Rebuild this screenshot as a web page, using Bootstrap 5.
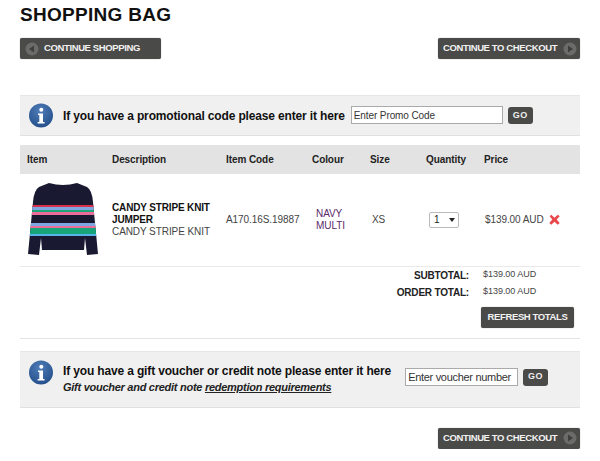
<!DOCTYPE html>
<html lang="en">
<head>
  <meta charset="utf-8">
  <title>Shopping Bag</title>
  <link href="https://cdn.jsdelivr.net/npm/bootstrap@5.3.0/dist/css/bootstrap.min.css" rel="stylesheet" />
  <style>
    body { font-family: "Liberation Sans", Arial, sans-serif; font-size: 10px; color: #333; background: #fff; }
    .bag-page { width: 560px; margin-left: 20px; }
    .bag-title { font-size: 19px; line-height: 22px; font-weight: 700; color: #111; margin: 4px 0 12px; letter-spacing: .3px; }
    .bag-btn { display: inline-flex; align-items: center; height: 21px; background: #4a4a48; color: #f2f2f2; font-size: 9.5px; font-weight: 700; letter-spacing: -.38px; border-radius: 2px; border: 0; padding: 0 5px; text-decoration: none; box-shadow: 0 0 1px #777; }
    .bag-btn svg { flex: none; }
    .btn-back { width: 141px; }
    .btn-back span { margin-left: 5px; }
    .btn-next { width: 142px; justify-content: space-between; padding-right: 3px; }
    .promo-box { background: #f0f0f0; border-top: 1px solid #e6e6e6; border-bottom: 1px solid #e0e0e0; padding-left: 8px; }
    .promo-one { height: 41px; margin-top: 36px; }
    .promo-two { height: 57px; margin-top: 12px; }
    .promo-icon { flex: none; margin-right: 9px; }
    .icon-top { align-self: flex-start; margin-top: 8px; }
    .promo-text { font-size: 12px; font-weight: 700; color: #111; letter-spacing: -.15px; white-space: nowrap; }
    .promo-sub { font-size: 11px; line-height: 13px; font-style: italic; font-weight: 700; color: #222; letter-spacing: -.27px; margin: 1px 0 2px; }
    .promo-sub a { color: #222; }
    .promo-input { height: 18px; border: 1px solid #aaa; background: #fff; font-size: 10px; color: #333; padding: 0 2px; font-family: inherit; border-radius: 0; }
    .promo-input::placeholder { color: #333; opacity: 1; }
    .code-input { width: 152px; margin-left: 6px; margin-top: -1px; letter-spacing: -.1px; }
    .voucher-input { width: 113px; margin-left: 14px; font-size: 11px; letter-spacing: -.3px; align-self: flex-start; margin-top: 16px; }
    .go-btn { width: 25px; height: 17px; background: #4a4a48; color: #eee; font-size: 9px; font-weight: 700; border: 0; border-radius: 3px; padding: 0; letter-spacing: .5px; margin-left: 5px; }
    .go-top { align-self: flex-start; margin-top: 17px; }
    .bag-table { table-layout: fixed; width: 560px; margin: 9px 0 0; font-size: 10px; letter-spacing: -.08px; }
    .bag-table th { background: #e3e3e3; height: 29px; padding: 0 0 0 7px; font-weight: 700; color: #222; vertical-align: middle; border: 0; font-size: 10px; }
    .bag-table td { height: 92px; padding: 0 0 0 7px; vertical-align: middle; border-bottom: 1px solid #eaeaea; color: #444; line-height: 12px; }
    .bag-table b { color: #111; letter-spacing: -.15px; }
    .col-item { width: 85px; } .col-desc { width: 114px; } .col-code { width: 86px; }
    .col-colour { width: 58px; } .col-size { width: 56px; } .col-qty { width: 58px; }
    .bag-table .colour-text { color: #5a2a6a; padding-left: 11px; }
    .bag-table .size-text { padding-left: 9px; }
    .bag-table .price-text { padding-left: 8px; }
    .qty-box { display: inline-flex; align-items: center; justify-content: space-between; width: 30px; height: 16px; margin-left: 3px; border: 1px solid #bbb; border-radius: 2px; font-size: 10px; color: #222; padding: 0 3px 0 4px; background: #fff; }
    .qty-box i { border-left: 3px solid transparent; border-right: 3px solid transparent; border-top: 4px solid #222; }
    .remove-icon { margin-left: 4px; }
    .total-line { height: 17px; font-weight: 700; font-size: 10px; letter-spacing: -.2px; color: #222; }
    .total-line span:first-child { width: 449px; text-align: right; }
    .total-line span:last-child { margin-left: 14px; font-size: 9px; font-weight: 400; color: #444; letter-spacing: -.03px; }
    .refresh-btn { width: 93px; justify-content: center; margin: 6px 6px 0 0; }
    .bag-rule { height: 1px; background: #e4e4e4; margin-top: 10px; }
    .checkout-end { margin-top: 20px; }
  </style>
</head>
<body>
  <div class="bag-page">
    <h1 class="bag-title">SHOPPING BAG</h1>

    <div class="d-flex justify-content-between">
      <a href="#" class="bag-btn btn-back">
        <svg width="14" height="14" viewBox="0 0 14 14"><circle cx="7" cy="7" r="6.5" fill="#6b6b69"/><path d="M9 3.5v7L4 7z" fill="#3f3f3d"/></svg>
        <span>CONTINUE SHOPPING</span>
      </a>
      <a href="#" class="bag-btn btn-next">
        <span>CONTINUE TO CHECKOUT</span>
        <svg width="14" height="14" viewBox="0 0 14 14"><circle cx="7" cy="7" r="6.5" fill="#6b6b69"/><path d="M5 3.5v7L10 7z" fill="#3f3f3d"/></svg>
      </a>
    </div>

    <div class="promo-box promo-one d-flex align-items-center">
      <svg width="26" height="26" viewBox="0 0 26 26" class="promo-icon"><defs><radialGradient id="infoA" cx=".45" cy=".3" r=".8"><stop offset="0" stop-color="#4f7db8"/><stop offset="1" stop-color="#1f4a86"/></radialGradient></defs><circle cx="13" cy="12.5" r="12" fill="url(#infoA)"/><circle cx="13.3" cy="6.8" r="2" fill="#fff"/><path d="M10 10.5h5v8.5h1.6v1.4H9.6V19h1.7v-7.1H10z" fill="#fff"/></svg>
      <span class="promo-text">If you have a promotional code please enter it here</span>
      <input class="promo-input code-input" placeholder="Enter Promo Code">
      <button class="go-btn">GO</button>
    </div>

    <table class="table bag-table">
      <colgroup><col class="col-item"><col class="col-desc"><col class="col-code"><col class="col-colour"><col class="col-size"><col class="col-qty"><col></colgroup>
      <thead>
        <tr><th>Item</th><th>Description</th><th>Item Code</th><th>Colour</th><th>Size</th><th>Quantity</th><th>Price</th></tr>
      </thead>
      <tbody>
        <tr>
          <td>
            <svg width="74" height="76" viewBox="0 0 74 76" class="d-block">
              <defs><clipPath id="jumperShape"><path d="M22 1 Q36 5 50 1 L60 5 Q65 8 66 20 L71 72 L60 73 L58 56 L57 68 L15 68 L14 56 L12 73 L1 72 L6 20 Q7 8 12 5Z"/></clipPath></defs>
              <g clip-path="url(#jumperShape)">
                <rect width="74" height="76" fill="#191a32"/>
                <rect y="23" width="74" height="2" fill="#d8304a"/>
                <rect y="25" width="74" height="3" fill="#7fa6e0"/>
                <rect y="28" width="74" height="2" fill="#1fa57a"/>
                <rect y="30" width="74" height="3" fill="#ec6c9c"/>
                <rect y="41" width="74" height="3" fill="#7fa6e0"/>
                <rect y="44" width="74" height="2" fill="#ec6c9c"/>
                <rect y="46" width="74" height="6" fill="#17a67a"/>
                <rect y="52" width="74" height="2" fill="#58b4e8"/>
              </g>
            </svg>
          </td>
          <td><b>CANDY STRIPE KNIT JUMPER</b><br>CANDY STRIPE KNIT</td>
          <td>A170.16S.19887</td>
          <td class="colour-text">NAVY<br>MULTI</td>
          <td class="size-text">XS</td>
          <td><span class="qty-box">1<i></i></span></td>
          <td class="price-text"><div class="d-flex align-items-center"><span class="text-nowrap">$139.00 AUD</span>
            <svg width="13" height="13" viewBox="0 0 12 12" class="remove-icon"><path d="M1.5 3 3 1.5 6 4.3 9 1.5 10.8 3 8 6l2.8 3.2L9 10.8 6 8 3 10.8 1.2 9.2 4 6z" fill="#e8474c"/></svg></div></td>
        </tr>
      </tbody>
    </table>

    <div class="total-line d-flex align-items-center"><span>SUBTOTAL:</span><span>$139.00 AUD</span></div>
    <div class="total-line d-flex align-items-center"><span>ORDER TOTAL:</span><span>$139.00 AUD</span></div>
    <div class="d-flex justify-content-end"><a href="#" class="bag-btn refresh-btn">REFRESH TOTALS</a></div>
    <div class="bag-rule"></div>

    <div class="promo-box promo-two d-flex align-items-center">
      <svg width="26" height="26" viewBox="0 0 26 26" class="promo-icon icon-top"><circle cx="13" cy="12.5" r="12" fill="url(#infoA)"/><circle cx="13.3" cy="6.8" r="2" fill="#fff"/><path d="M10 10.5h5v8.5h1.6v1.4H9.6V19h1.7v-7.1H10z" fill="#fff"/></svg>
      <div class="promo-text">If you have a gift voucher or credit note please enter it here
        <div class="promo-sub">Gift voucher and credit note <a href="#">redemption requirements</a></div>
      </div>
      <input class="promo-input voucher-input" placeholder="Enter voucher number">
      <button class="go-btn go-top">GO</button>
    </div>

    <div class="d-flex justify-content-end checkout-end"><a href="#" class="bag-btn btn-next">
      <span>CONTINUE TO CHECKOUT</span>
      <svg width="14" height="14" viewBox="0 0 14 14"><circle cx="7" cy="7" r="6.5" fill="#6b6b69"/><path d="M5 3.5v7L10 7z" fill="#3f3f3d"/></svg>
    </a></div>
  </div>
  <script src="https://cdn.jsdelivr.net/npm/bootstrap@5.3.0/dist/js/bootstrap.bundle.min.js"></script>
</body>
</html>
